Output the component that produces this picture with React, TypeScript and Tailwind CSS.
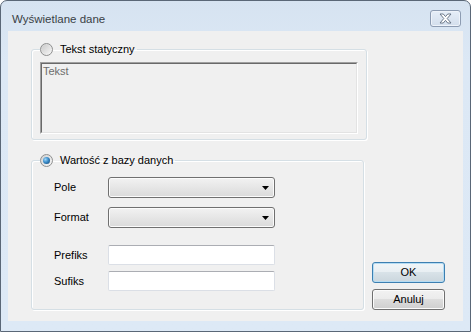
import React from "react";

function Radio({ checked }: { checked?: boolean }) {
  return (
    <div className="w-[13px] h-[13px] rounded-full border border-[#8e8f8f] bg-[linear-gradient(135deg,#d0d0d0,#f8f8f8)] flex items-center justify-center shrink-0">
      {checked ? (
        <div className="w-[7px] h-[7px] rounded-full bg-[radial-gradient(circle_at_35%_35%,#9fd6f8_0%,#3a8cc9_45%,#0f3d6b_100%)]" />
      ) : (
        <div className="w-[9px] h-[9px] rounded-full bg-[linear-gradient(135deg,#cbcbcb,#f4f4f4)]" />
      )}
    </div>
  );
}

function Combo() {
  return (
    <div className="w-[167px] h-[21px] rounded-[3px] border border-[#707070] bg-[linear-gradient(#f2f2f2,#dadada)] flex items-center justify-end pr-[5px] shadow-[inset_0_0_0_1px_#fbfbfb]">
      <svg width="7" height="4" viewBox="0 0 7 4">
        <polygon points="0,0 7,0 3.5,4" fill="#000" />
      </svg>
    </div>
  );
}

function TextInput() {
  return (
    <div className="w-[167px] h-[20px] rounded-[2px] border border-[#dbdfe6] border-t-[#abadb3] bg-white" />
  );
}

function Button({ label, def }: { label: string; def?: boolean }) {
  return (
    <div
      className={
        "w-[73px] h-[21px] rounded-[3px] border flex items-center justify-center text-[11px] text-black " +
        (def
          ? "border-[#3c7fb1] bg-[linear-gradient(#f0f5f8_0%,#e8eef2_50%,#d8e2e8_50%,#cbd6dd_100%)] shadow-[inset_0_0_0_1px_#b5dcf3]"
          : "border-[#707070] bg-[linear-gradient(#f2f2f2_0%,#ebebeb_50%,#dddddd_50%,#cfcfcf_100%)] shadow-[inset_0_0_0_1px_#fbfbfb]")
      }
    >
      {label}
    </div>
  );
}

export default function App() {
  return (
    <div className="w-[471px] h-[332px] font-['Liberation_Sans',Arial,sans-serif] bg-white">
      <div className="w-[471px] h-[332px] rounded-t-[7px] border border-[#5a6777] bg-[linear-gradient(#d6e3f1,#dce8f5_60px,#dde9f6)] flex flex-col">
        {/* title bar */}
        <div className="h-[30px] flex items-start justify-between pl-[11px] pr-[9px]">
          <div className="pt-[11px] text-[11.5px] leading-[14px] text-[#3a3f45]">Wyświetlane dane</div>
          <div className="mt-[9px] w-[31px] h-[17px] rounded-[3px] border border-[#8d9cb2] bg-[linear-gradient(#e6eef8,#d3deec)] shadow-[inset_0_0_0_1px_#eef3fa] flex items-center justify-center">
            <svg width="15" height="11" viewBox="0 0 15 11">
              <path
                d="M2 1 L5.3 1 L7.5 3.6 L9.7 1 L13 1 L9.2 5.5 L13 10 L9.7 10 L7.5 7.4 L5.3 10 L2 10 L5.8 5.5 Z"
                fill="#ffffff"
                stroke="#5d6b7e"
                strokeWidth="0.9"
                strokeLinejoin="round"
              />
            </svg>
          </div>
        </div>
        {/* client */}
        <div className="mx-[7px] h-[290px] bg-[#f0f0f0] flex pt-[11px] pl-[23px] pr-[18px] pb-[11px] gap-[8px] text-[11px] text-black">
          <div className="w-[333px] flex flex-col">
            <fieldset className="border border-[#d5dfe5] rounded-[3px] px-[8px] pb-[5px] shadow-[inset_1px_1px_0_#ffffff,1px_1px_0_#ffffff]">
              <legend className="h-[15px] flex items-center gap-[7px] pr-[2px]">
                <Radio />
                <span className="leading-[13px]">Tekst statyczny</span>
              </legend>
              <div className="mt-[5px] w-[318px] h-[72px] border-t border-l border-t-[#a0a0a0] border-l-[#a0a0a0] border-r border-b border-r-white border-b-white">
                <div className="w-full h-full border-t border-l border-t-[#696969] border-l-[#696969] border-r border-b border-r-[#e3e3e3] border-b-[#e3e3e3] pl-[1px] pt-[1px] text-[#6d6d6d] leading-[13px]">
                  Tekst
                </div>
              </div>
            </fieldset>
            <fieldset className="mt-[13px] border border-[#d5dfe5] rounded-[3px] px-[8px] pb-[18px] shadow-[inset_1px_1px_0_#ffffff,1px_1px_0_#ffffff]">
              <legend className="h-[15px] flex items-center gap-[7px] pr-[2px]">
                <Radio checked />
                <span className="leading-[13px]">Wartość z bazy danych</span>
              </legend>
              <div className="pl-[14px] flex flex-col">
                <div className="mt-[9px] flex items-center">
                  <span className="w-[54px]">Pole</span>
                  <Combo />
                </div>
                <div className="mt-[9px] flex items-center">
                  <span className="w-[54px]">Format</span>
                  <Combo />
                </div>
                <div className="mt-[17px] flex items-center">
                  <span className="w-[54px]">Prefiks</span>
                  <TextInput />
                </div>
                <div className="mt-[6px] flex items-center">
                  <span className="w-[54px]">Sufiks</span>
                  <TextInput />
                </div>
              </div>
            </fieldset>
          </div>
          <div className="flex flex-col justify-end gap-[6px]">
            <Button label="OK" def />
            <Button label="Anuluj" />
          </div>
        </div>
      </div>
    </div>
  );
}
